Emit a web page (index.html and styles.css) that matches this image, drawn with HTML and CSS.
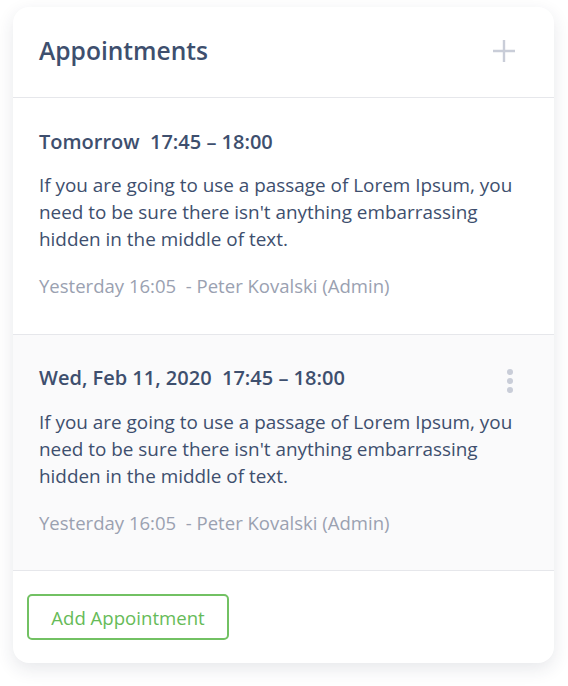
FILE: index.html
```
<!DOCTYPE html>
<html>
<head>
<meta charset="utf-8">
<link rel="stylesheet" href="styles.css">
</head>
<body>
<div class="card">
  <div class="header">
    <h1 class="title">Appointments</h1>
    <svg class="plus" width="24" height="24" viewBox="0 0 24 24"><path d="M12 1v22M1 12h22" stroke="#c9cdd8" stroke-width="2.4" fill="none"/></svg>
  </div>
  <div class="item">
    <div class="item-head"><span class="when">Tomorrow&nbsp; 17:45 – 18:00</span></div>
    <p class="text">If you are going to use a passage of Lorem Ipsum, you need to be sure there isn't anything embarrassing hidden in the middle of text.</p>
    <div class="meta">Yesterday 16:05&nbsp; - Peter Kovalski (Admin)</div>
  </div>
  <div class="item item-alt">
    <div class="item-head"><span class="when">Wed, Feb 11, 2020&nbsp; 17:45 – 18:00</span>
      <span class="dots"><i></i><i></i><i></i></span>
    </div>
    <p class="text">If you are going to use a passage of Lorem Ipsum, you need to be sure there isn't anything embarrassing hidden in the middle of text.</p>
    <div class="meta">Yesterday 16:05&nbsp; - Peter Kovalski (Admin)</div>
  </div>
  <div class="footer">
    <button class="add">Add Appointment</button>
  </div>
</div>
</body>
</html>
```
FILE: styles.css
```
* { box-sizing: border-box; }
body {
  margin: 0;
  background: #ffffff;
  font-family: "Open Sans", "Noto Sans", sans-serif;
  padding: 7px 14px 24px 13px;
}
.card {
  width: 541px;
  background: #fff;
  border-radius: 16px;
  box-shadow: 0 6px 18px rgba(40, 50, 70, 0.11);
  overflow: hidden;
}
.header {
  height: 91px;
  display: flex;
  align-items: center;
  justify-content: space-between;
  padding: 0 26px 3px 26px;
  border-bottom: 1px solid #e6e7eb;
}
.title {
  margin: 0;
  font-size: 24.6px;
  font-weight: 600;
  color: #3e4f6e;
}
.plus { margin-right: 12px; }
.item {
  padding: 30px 26px 35.5px 26px;
  border-bottom: 1px solid #e6e7eb;
}
.item-alt { background: #fafafb; }
.item-head {
  display: flex;
  justify-content: space-between;
  align-items: center;
  height: 26px;
}
.when {
  font-size: 20px;
  font-weight: 600;
  color: #3e4f6e;
}
.dots {
  display: flex;
  flex-direction: column;
  gap: 3px;
  margin-right: 15px;
  margin-top: 6px;
}
.dots i {
  width: 6px;
  height: 6px;
  border-radius: 50%;
  background: #c9cdd8;
}
.text {
  margin: 18px 0 0 0;
  font-size: 18.9px;
  line-height: 27px;
  color: #3e4f6e;
}
.meta {
  margin-top: 20px;
  font-size: 18.55px;
  line-height: 25px;
  color: #9aa1b1;
}
.footer {
  padding: 23px 14px 23px 14px;
}
.add {
  display: block;
  width: 202px;
  height: 46px;
  border: 2px solid #72c163;
  border-radius: 5px;
  background: #fff;
  color: #66bb58;
  font-family: "Open Sans", "Noto Sans", sans-serif;
  font-size: 18.6px;
  padding: 0;
}
```
